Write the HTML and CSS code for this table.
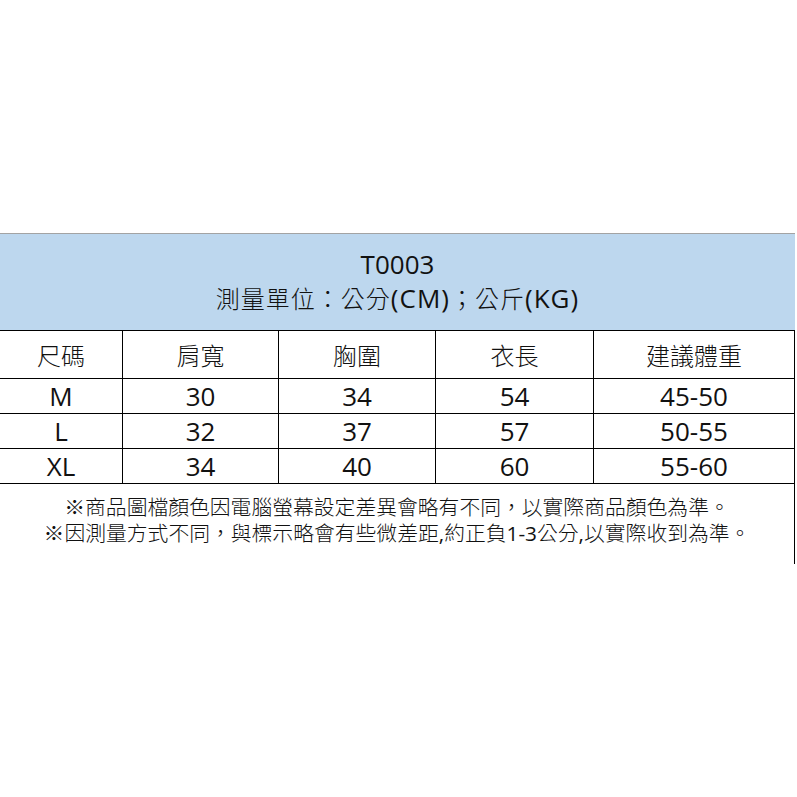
FILE: index.html
```html
<!DOCTYPE html>
<html lang="zh-Hant">
<head>
<meta charset="utf-8">
<title>T0003 尺寸表</title>
<link rel="stylesheet" href="styles.css">
</head>
<body>
<div class="sheet">
  <div class="title">
    <div class="code">T0003</div>
    <div class="unit">測量單位：公分<span class="lat">(CM)</span>；公斤<span class="lat">(KG)</span></div>
  </div>
  <div class="grid">
    <div class="cell head">尺碼</div>
    <div class="cell head">肩寬</div>
    <div class="cell head">胸圍</div>
    <div class="cell head">衣長</div>
    <div class="cell head">建議體重</div>

    <div class="cell">M</div>
    <div class="cell">30</div>
    <div class="cell">34</div>
    <div class="cell">54</div>
    <div class="cell">45-50</div>

    <div class="cell">L</div>
    <div class="cell">32</div>
    <div class="cell">37</div>
    <div class="cell">57</div>
    <div class="cell">50-55</div>

    <div class="cell">XL</div>
    <div class="cell">34</div>
    <div class="cell">40</div>
    <div class="cell">60</div>
    <div class="cell">55-60</div>
  </div>
  <div class="notes">
    <p>※商品圖檔顏色因電腦螢幕設定差異會略有不同，以實際商品顏色為準。</p>
    <p>※因測量方式不同，與標示略會有些微差距<span class="num">,</span>約正負<span class="num">1-3</span>公分<span class="num">,</span>以實際收到為準。</p>
  </div>
</div>
</body>
</html>
```

FILE: styles.css
```css
html, body {
  margin: 0;
  padding: 0;
  background: #ffffff;
}

body {
  font-family: "Open Sans", "Noto Sans CJK TC", sans-serif;
  color: #111111;
}

.sheet {
  margin-top: 233px;
  width: 795px;
  border-top: 1px solid #a3a3a3;
}

.title {
  box-sizing: border-box;
  height: 97px;
  background: #bdd7ee;
  border-bottom: 1px solid #000000;
  display: flex;
  flex-direction: column;
  justify-content: center;
  align-items: center;
  line-height: 34px;
  padding-bottom: 2px;
}

.code {
  font-size: 26px;
}

.unit {
  font-size: 24px;
  font-weight: 300;
  letter-spacing: 1px;
}

.lat {
  font-size: 26px;
  font-weight: 400;
}

.grid {
  display: grid;
  grid-template-columns: 123px 156px 157px 158px 201px;
  grid-template-rows: 48px 35px 35px 35px;
}

.cell {
  box-sizing: border-box;
  border-right: 1px solid #000000;
  border-bottom: 1px solid #000000;
  display: flex;
  align-items: center;
  justify-content: center;
  font-size: 26px;
  line-height: 1;
}

.head {
  font-size: 24px;
  font-weight: 300;
  padding-top: 2px;
}

.notes {
  box-sizing: border-box;
  height: 80px;
  border-right: 1px solid #000000;
  padding-top: 10px;
  text-align: center;
  font-size: 20.8px;
  font-weight: 300;
  line-height: 26px;
}

.notes p {
  margin: 0;
  white-space: nowrap;
}

.num {
  font-weight: 400;
}
```
